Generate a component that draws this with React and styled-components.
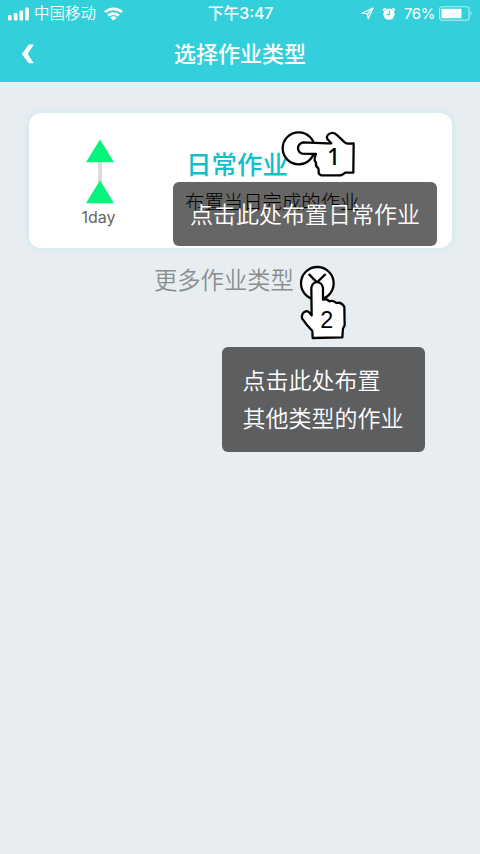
import React from 'react'
import styled, { createGlobalStyle } from 'styled-components'

const GlobalStyle = createGlobalStyle`
  body {
    margin: 0;
    background: #e7edf0;
    font-family: Inter, 'Noto Sans CJK SC', sans-serif;
  }
`

const Screen = styled.div`
  position: relative;
  width: 480px;
  height: 854px;
  overflow: hidden;
  background: #e7edf0;
`

const Header = styled.header`
  height: 82px;
  background: #33cfda;
  color: #fff;
`

const StatusBar = styled.div`
  display: grid;
  grid-template-columns: 1fr auto 1fr;
  align-items: center;
  height: 27px;
  padding: 0 7px 0 8px;
  font-size: 15.5px;
  line-height: 27px;
`

const StatusGroup = styled.div`
  display: flex;
  align-items: center;
  justify-content: ${props => (props.$end ? 'flex-end' : 'flex-start')};
`

const Carrier = styled.span`
  margin: 0 8px 0 5px;
  font-weight: 350;
`

const Time = styled.span`
  font-size: 15.8px;
  font-weight: 500;
`

const Percent = styled.span`
  margin: 0 4px 0 8px;
  font-size: 15px;
  letter-spacing: -0.4px;
`

const StatusIcon = styled.svg`
  display: block;
  flex: none;
  margin-left: ${props => props.$gap || 0}px;
`

const NavBar = styled.div`
  display: grid;
  grid-template-columns: 60px 1fr 60px;
  align-items: center;
  height: 54px;
`

const BackButton = styled.button`
  justify-self: start;
  padding: 0 0 1px 21px;
  border: 0;
  background: none;
  line-height: 0;
`

const Title = styled.h1`
  margin: 0;
  font-size: 22px;
  font-weight: 500;
  line-height: 54px;
  text-align: center;
`

const Card = styled.section`
  display: flex;
  height: 135px;
  margin: 31px 28px 0 29px;
  border-radius: 12px;
  background: #fff;
  box-shadow: 0 0 4px 2px #d2eaf0;
`

const Duration = styled.div`
  display: flex;
  flex-direction: column;
  align-items: center;
  width: 141px;
  padding-top: 26px;
  box-sizing: border-box;
  color: #666;
  font-size: 16px;
  line-height: 27px;
`

const DurationLabel = styled.span`
  margin-right: 2px;
`

const CardText = styled.div`
  padding: 34px 0 0 16px;
`

const CardTitle = styled.h2`
  margin: 0;
  color: #14bfca;
  font-size: 25.5px;
  font-weight: 500;
  line-height: 36px;
`

const CardNote = styled.p`
  margin: 5px 0 0 -1px;
  color: #000;
  font-size: 19.4px;
  font-weight: 300;
  line-height: 28px;
`

const More = styled.div`
  margin: 14px 0 0 154px;
  color: #8b8d8f;
  font-size: 23.3px;
  font-weight: 350;
  line-height: 38px;
`

const Tooltip = styled.div`
  position: absolute;
  left: ${props => props.$x}px;
  top: ${props => props.$y}px;
  width: ${props => props.$width}px;
  padding: ${props => props.$padding};
  box-sizing: border-box;
  border-radius: 6px;
  background: ${props => props.$bg || 'rgba(0, 0, 0, 0.6)'};
  color: #fff;
  font-size: 23px;
  font-weight: 350;
  line-height: 38px;
  white-space: nowrap;
`

const Pointer = styled.svg`
  position: absolute;
  left: ${props => props.$x}px;
  top: ${props => props.$y}px;
  fill: #fff;
  stroke: #000;
  stroke-width: 6.8;
  stroke-linecap: round;
  stroke-linejoin: round;
`

const Step = styled.text`
  fill: #000;
  stroke: none;
  font-family: ${props => props.$family || 'Liberation Sans'}, sans-serif;
  font-size: 70px;
`

const Signal = () => (
  <StatusIcon width="21" height="14" fill="#fff">
    <rect x="0" y="8" width="3.6" height="5.4" rx="1" />
    <rect x="5.8" y="6" width="3.6" height="7.4" rx="1" />
    <rect x="11.5" y="3.5" width="3.6" height="9.9" rx="1" />
    <rect x="17.3" y="0.5" width="3.6" height="12.9" rx="1" />
  </StatusIcon>
)

const Wifi = () => (
  <StatusIcon width="19" height="14" viewBox="0 0 18 14" preserveAspectRatio="none" fill="none" stroke="#fff" strokeWidth="2.6">
    <path d="M1 5.1A11.5 11.5 0 0 1 17 5.1" />
    <path d="M4 8.6A7.2 7.2 0 0 1 14 8.6" />
    <path d="M9 13.4L5.9 10.6A4.5 4.5 0 0 1 12.1 10.6Z" fill="#fff" stroke="none" />
  </StatusIcon>
)

const Location = () => (
  <StatusIcon width="13" height="13" viewBox="0 0 13 13" fill="none" stroke="#fff" strokeWidth="1.2" strokeLinejoin="round">
    <path d="M1 6.2L12 1L7.2 11.8L6.6 6.8Z" />
    <path d="M6.6 6.8L12 1" />
  </StatusIcon>
)

const Alarm = () => (
  <StatusIcon $gap={8} width="14" height="14" viewBox="0 0 14 14">
    <circle cx="7" cy="7.2" r="5.6" fill="#fff" />
    <path d="M1 3.4L3.6 1.2M10.4 1.2L13 3.4" stroke="#fff" strokeWidth="1.6" />
    <path d="M7.5 4V7.6H4.5" fill="none" stroke="#33cfda" strokeWidth="1.1" />
  </StatusIcon>
)

const Battery = () => (
  <StatusIcon width="34" height="16" viewBox="0 0 34 16">
    <rect x="0.6" y="0.8" width="29.5" height="13.4" rx="2.5" fill="none" stroke="#b9edf2" strokeWidth="1.1" />
    <rect x="2.5" y="2.7" width="20" height="9.6" rx="0.8" fill="#fff" />
    <path d="M31.5 5Q34 7.3 31.5 9.6Z" fill="#b9edf2" />
  </StatusIcon>
)

const DayRange = () => (
  <svg width="28" height="65" viewBox="0 0 28 65">
    <path d="M12.2 22h3.8v21h-3.8z" fill="#dadada" />
    <path d="M14 0.5L28 23.2H0ZM14 41.2L28 64.3H0Z" fill="#06f47b" />
  </svg>
)

const App = () => {
  return (
    <Screen>
      <GlobalStyle />
      <Header>
        <StatusBar>
          <StatusGroup>
            <Signal />
            <Carrier>中国移动</Carrier>
            <Wifi />
          </StatusGroup>
          <Time>下午3:47</Time>
          <StatusGroup $end>
            <Location />
            <Alarm />
            <Percent>76%</Percent>
            <Battery />
          </StatusGroup>
        </StatusBar>
        <NavBar>
          <BackButton aria-label="返回">
            <svg width="14" height="20" viewBox="0 0 14 20">
              <path d="M7.8 0.5H12.8L6.7 10L12.8 19.3H7.8L0.8 10Z" fill="#fff" />
            </svg>
          </BackButton>
          <Title>选择作业类型</Title>
        </NavBar>
      </Header>

      <Card>
        <Duration>
          <DayRange />
          <DurationLabel>1day</DurationLabel>
        </Duration>
        <CardText>
          <CardTitle>日常作业</CardTitle>
          <CardNote>布置当日完成的作业</CardNote>
        </CardText>
      </Card>
      <More>更多作业类型</More>

      <Tooltip $x={173} $y={182} $width={264} $padding="14px 17px 12px">
        点击此处布置日常作业
      </Tooltip>
      <Tooltip $x={221.5} $y={347} $width={203.5} $padding="15px 21px 14px" $bg="#5d5e60">
        点击此处布置
        <br />
        其他类型的作业
      </Tooltip>

      <Pointer $x={270} $y={120} width="100" height="70" viewBox="0 0 300 210">
        <circle cx="86" cy="85" r="48" />
        <path d="M184 70L172 57C168 48 174 41 185 39C191 38 196 40 202 46L224 67Q229 71 236 71L251 70L250 158L225 158Q217 167 204 166L154 166Q144 163 146 153L145 145Q136 139 138 128L134 122Q133 112 138 102L97 101Q84 97 84 84Q85 71 99 67L172 70Z" />
        <Step x="171" y="135" $family="'Noto Sans'" fontWeight="500">1</Step>
      </Pointer>
      <Pointer $x={280} $y={255} width="90" height="95" viewBox="0 0 270 285">
        <circle cx="112" cy="85" r="49" />
        <path d="M88 59L111 82L135 59" fill="none" />
        <path d="M95 181L94 99Q96 83 111 81Q126 83 129 99V134Q140 130 148 139Q160 134 169 144Q185 140 193 156L194 211Q188 218 188 232L187 247L98 249L97 228L81 210L66 190Q64 174 77 169Q84 166 94 180Z" />
        <Step x="121" y="220">2</Step>
      </Pointer>
    </Screen>
  )
}

export default App
